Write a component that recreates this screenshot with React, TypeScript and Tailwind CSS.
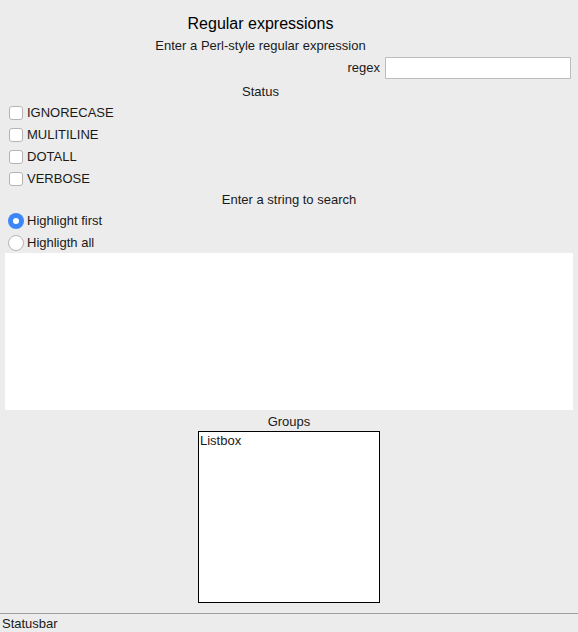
import React, { useState } from 'react';

const flags = ['IGNORECASE', 'MULITILINE', 'DOTALL', 'VERBOSE'];

export default function App() {
    const [mode, setMode] = useState('first');

    return (
        <div className="w-[578px] h-[632px] bg-[#ececec] text-[13px] text-[#1a1a1a] flex flex-col" style={{ fontFamily: '"Liberation Sans", Arial, sans-serif' }}>
            <div className="flex-1 flex flex-col">
                <div className="w-[521px] flex flex-col items-center">
                    <h1 className="text-[16px] leading-[22px] mt-[13px] text-black">Regular expressions</h1>
                    <p className="leading-[16px] mt-[3px]">Enter a Perl-style regular expression</p>
                </div>
                <div className="flex items-center justify-end gap-[5px] mt-[3px] pr-[7px]">
                    <span>regex</span>
                    <input className="w-[186px] h-[22px] bg-white border border-[#bdbdbd] outline-none px-1" />
                </div>
                <div className="w-[521px] flex flex-col items-center">
                    <p className="leading-[16px] mt-[5px]">Status</p>
                </div>
                <div className="flex flex-col mt-[2px] pl-[9px]">
                    {flags.map((f) => (
                        <label key={f} className="flex items-center gap-[4px] h-[22px]">
                            <span className="w-[14px] h-[14px] rounded-[3px] border border-[#b5b5b5] bg-white" />
                            <span>{f}</span>
                        </label>
                    ))}
                </div>
                <p className="text-center leading-[16px] mt-[2px]">Enter a string to search</p>
                <div className="flex flex-col mt-[2px] pl-[8px]">
                    {[
                        ['first', 'Highlight first'],
                        ['all', 'Highligth all'],
                    ].map(([k, label]) => (
                        <label key={k} className="flex items-center gap-[3px] h-[22px]" onClick={() => setMode(k)}>
                            {mode === k ? (
                                <span className="w-[16px] h-[16px] rounded-full bg-[#3d86f7] flex items-center justify-center">
                                    <span className="w-[6px] h-[6px] rounded-full bg-white" />
                                </span>
                            ) : (
                                <span className="w-[16px] h-[16px] rounded-full border border-[#b5b5b5] bg-white" />
                            )}
                            <span>{label}</span>
                        </label>
                    ))}
                </div>
                <div className="mx-[5px] mt-[-1px] h-[157px] bg-white" />
                <p className="text-center leading-[16px] mt-[4px]">Groups</p>
                <div className="self-center mt-[1px] w-[182px] h-[172px] bg-white border border-black px-[1px] leading-[18px]">
                    Listbox
                </div>
            </div>
            <div className="border-t border-[#a0a0a0] h-[19px] px-[2px] leading-[19px]">Statusbar</div>
        </div>
    );
}
